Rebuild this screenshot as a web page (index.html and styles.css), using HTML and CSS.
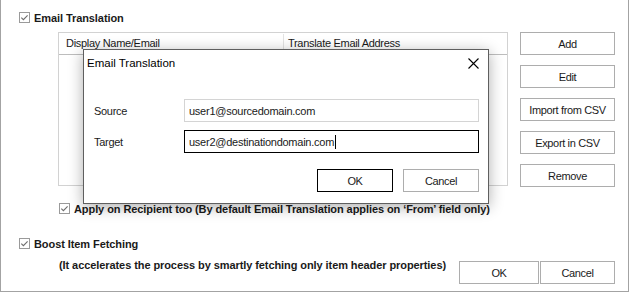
FILE: index.html
```html
<!DOCTYPE html>
<html>
<head>
<meta charset="utf-8">
<link rel="stylesheet" href="styles.css">
</head>
<body>
<div class="frame">
  <div class="check-row head">
    <svg class="cb" width="11" height="11" viewBox="0 0 11 11"><rect x="0.5" y="0.5" width="10" height="10" fill="#fff" stroke="#9a9a9a"/><path d="M2.3 5.6 L4.4 7.7 L8.6 3.3" fill="none" stroke="#6e6e6e" stroke-width="1.1"/></svg>
    <span class="bold">Email Translation</span>
  </div>
  <div class="main">
    <div class="listbox">
      <div class="list-head">
        <div class="col c1">Display Name/Email</div>
        <div class="col c2">Translate Email Address</div>
      </div>
    </div>
    <div class="btn-col">
      <button class="btn">Add</button>
      <button class="btn">Edit</button>
      <button class="btn">Import from CSV</button>
      <button class="btn">Export in CSV</button>
      <button class="btn">Remove</button>
    </div>
  </div>
  <div class="check-row apply">
    <svg class="cb" width="11" height="11" viewBox="0 0 11 11"><rect x="0.5" y="0.5" width="10" height="10" fill="#fff" stroke="#9a9a9a"/><path d="M2.3 5.6 L4.4 7.7 L8.6 3.3" fill="none" stroke="#6e6e6e" stroke-width="1.1"/></svg>
    <span class="bold">Apply on Recipient too (By default Email Translation applies on ‘From’ field only)</span>
  </div>
  <div class="check-row boost">
    <svg class="cb" width="11" height="11" viewBox="0 0 11 11"><rect x="0.5" y="0.5" width="10" height="10" fill="#fff" stroke="#9a9a9a"/><path d="M2.3 5.6 L4.4 7.7 L8.6 3.3" fill="none" stroke="#6e6e6e" stroke-width="1.1"/></svg>
    <span class="bold">Boost Item Fetching</span>
  </div>
  <div class="footer">
    <p class="note bold">(It accelerates the process by smartly fetching only item header properties)</p>
    <div class="footer-btns">
      <button class="btn ok">OK</button>
      <button class="btn cancel">Cancel</button>
    </div>
  </div>

  <div class="dialog">
    <div class="dlg-title">
      <span>Email Translation</span>
      <svg class="close" width="11" height="11" viewBox="0 0 11 11"><path d="M0.5 0.5 L10.5 10.5 M10.5 0.5 L0.5 10.5" stroke="#000" stroke-width="1.1" fill="none"/></svg>
    </div>
    <div class="dlg-body">
      <div class="field">
        <span class="label">Source</span>
        <div class="input">user1@sourcedomain.com</div>
      </div>
      <div class="field">
        <span class="label">Target</span>
        <div class="input focus">user2@destinationdomain.com<span class="caret"></span></div>
      </div>
      <div class="dlg-btns">
        <button class="btn dbtn default">OK</button>
        <button class="btn dbtn">Cancel</button>
      </div>
    </div>
  </div>
</div>
</body>
</html>
```

FILE: styles.css
```css
* { box-sizing: border-box; }
html, body { margin: 0; padding: 0; background: #fff; }
body {
  font-family: "Liberation Sans", Arial, sans-serif;
  font-size: 11px;
  color: #000;
}
.frame {
  position: relative;
  width: 629px;
  height: 292px;
  border-left: 1px solid #a3a3a3;
  border-right: 1px solid #a3a3a3;
  border-bottom: 1px solid #a3a3a3;
  padding: 12px 13px 0 0;
}
.bold { font-weight: bold; font-size: 11px; letter-spacing: -0.08px; color: #1a1a1a; }
.check-row {
  display: flex;
  align-items: center;
  gap: 4px;
  height: 11px;
  white-space: nowrap;
}
.cb { display: block; flex: none; }
.head { margin-left: 18px; }
.main {
  display: flex;
  align-items: flex-start;
  margin-top: 9px;
  margin-left: 57px;
  gap: 12px;
}
.listbox {
  width: 450px;
  height: 154px;
  border: 1px solid #d2d2d2;
  background: #fff;
}
.list-head {
  display: flex;
  height: 22px;
  border-bottom: 1px solid #bdbdbd;
  font-size: 11px;
  letter-spacing: -0.3px;
  color: #1a1a1a;
}
.col { line-height: 21px; white-space: nowrap; }
.c1 {
  width: 225px;
  padding-left: 7px;
  border-right: 1px solid #e3e3e3;
  margin: 1px 0 3px;
  line-height: 18px;
}
.c2 { padding-left: 4px; }
.btn-col {
  display: flex;
  flex-direction: column;
  gap: 10px;
}
.btn {
  display: flex;
  align-items: center;
  justify-content: center;
  height: 23px;
  padding: 0;
  background: #fff;
  border: 1px solid #adadad;
  font-family: inherit;
  font-size: 11px;
  letter-spacing: -0.35px;
  color: #1a1a1a;
  white-space: nowrap;
}
.btn-col .btn { width: 95px; }
.apply { margin-top: 16px; margin-left: 58px; }
.boost { margin-top: 24px; margin-left: 18px; }
.footer {
  display: flex;
  align-items: flex-start;
  margin-top: 8px;
}
.note {
  margin: 0 0 0 58px;
  line-height: 16px;
  white-space: nowrap;
}
.footer-btns {
  display: flex;
  gap: 1px;
  margin-left: auto;
  margin-top: 4px;
}
.ok { width: 80px; }
.cancel { width: 75px; }

.dialog {
  position: absolute;
  left: 82px;
  top: 49px;
  width: 406px;
  height: 155px;
  background: #fff;
  border: 1px solid #5f5f5f;
  box-shadow: 0 3px 14px rgba(0,0,0,0.32);
}
.dlg-title {
  display: flex;
  align-items: center;
  justify-content: space-between;
  height: 26px;
  padding-left: 3px;
  padding-right: 9px;
  font-size: 11.5px;
}
.dlg-body {
  padding: 23px 9px 0 10px;
}
.field {
  display: flex;
  align-items: center;
  margin-bottom: 8px;
}
.label { width: 90px; font-size: 11px; letter-spacing: -0.3px; color: #1a1a1a; }
.input {
  flex: 1;
  height: 23px;
  border: 1px solid #d4d4d4;
  padding-left: 4px;
  display: flex;
  align-items: center;
  font-size: 11px;
  letter-spacing: -0.25px;
  color: #1a1a1a;
}
.input.focus { border-color: #000; }
.caret {
  display: inline-block;
  width: 1px;
  height: 14px;
  background: #000;
  margin-left: 1px;
}
.dlg-btns {
  display: flex;
  justify-content: flex-end;
  gap: 10px;
  margin-top: 16px;
}
.dbtn { width: 76px; }
.dbtn.default { border-color: #000; }
```
